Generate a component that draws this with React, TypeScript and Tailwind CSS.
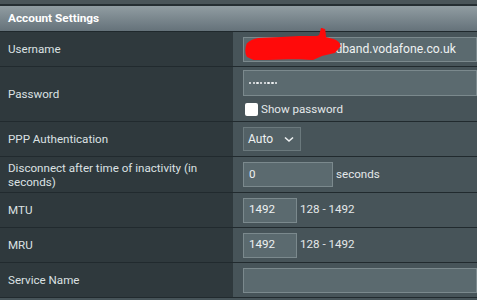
import React from "react";

const FONT = { fontFamily: "Roboto, 'Noto Sans', sans-serif" };

function Row({
  label,
  h,
  children,
}: {
  label: React.ReactNode;
  h: string;
  children?: React.ReactNode;
}) {
  return (
    <div className={`grid grid-cols-[233px_1fr] border-b border-[#212a2e] ${h}`}>
      <div className="flex items-center bg-[#2f393d] pl-2 pr-3 text-[11.6px] leading-[14px] text-[#dce1e3]">
        {label}
      </div>
      <div className="flex items-center bg-[#475459] pl-[10px]">{children}</div>
    </div>
  );
}

const inputCls =
  "h-[25px] border border-[#7b898d] bg-[#5b6a6f] pl-[5px] text-[11.6px] text-[#eef1f2] flex items-center";

export default function App() {
  return (
    <div className="h-[300px] w-[477px] overflow-hidden bg-[#475459]" style={FONT}>
      <div className="h-[6px] border-b-2 border-[#252e32] bg-[#4a5559]" />
      <div className="flex h-[26px] items-center border-b border-[#1f282c] bg-gradient-to-b from-[#919da2] to-[#65727a] pl-2 text-[11.8px] font-bold text-white">
        Account Settings
      </div>

      <Row label="Username" h="h-[35px]">
        <div className={`${inputCls} relative w-full text-[12.2px]`}>
          <span className="pl-[51px]">@broadband.vodafone.co.uk</span>
          {/* red scribble drawn over the account name */}
          <svg
            className="absolute left-[-1px] top-[-10px]"
            width="104"
            height="36"
            viewBox="0 0 115 36"
            preserveAspectRatio="none"
          >
            <path
              d="M5 16 Q10 12 17 11 L42 10 L62 9 L82 9 L85 8 L87 1 L90 2 L91 10 L100 12 Q106 14 107 18 L101 24 L87 27 L77 31 L57 30 L27 31 L12 31 L5 28 Q2 23 5 16 Z"
              fill="#ff0a0a"
              stroke="#ff0a0a"
              strokeWidth="2"
              strokeLinejoin="round"
            />
          </svg>
        </div>
      </Row>

      <Row label="Password" h="h-[55px]">
        <div className="flex w-full flex-col">
          <div className={`${inputCls} h-[26px] w-full gap-[1.3px]`}>
            {Array.from({ length: 8 }).map((_, i) => (
              <span key={i} className="h-[2.4px] w-[2.4px] rounded-full bg-[#eef1f2]" />
            ))}
          </div>
          <label className="mt-[5px] flex items-center gap-[3px] pl-[2px] text-[11.6px] text-[#e4e8ea]">
            <span className="inline-block h-[13px] w-[13px] rounded-[2px] bg-white" />
            Show password
          </label>
        </div>
      </Row>

      <Row label="PPP Authentication" h="h-[35px]">
        <div className="flex h-[24px] w-[58px] items-center justify-between border border-[#6b797d] bg-[#536166] pl-[4px] pr-[6px] text-[12px] text-[#eef1f2]">
          Auto
          <svg width="10" height="7" viewBox="0 0 10 7">
            <path d="M1 1.5 L5 5 L9 1.5" stroke="#eef1f2" strokeWidth="1.6" fill="none" />
          </svg>
        </div>
      </Row>

      <Row
        label={
          <span>
            Disconnect after time of inactivity (in
            <br />
            seconds)
          </span>
        }
        h="h-[36px]"
      >
        <div className={`${inputCls} w-[90px]`}>0</div>
        <span className="ml-[3px] text-[11.6px] text-[#e4e8ea]">seconds</span>
      </Row>

      <Row label="MTU" h="h-[35px]">
        <div className={`${inputCls} w-[54px]`}>1492</div>
        <span className="ml-[3px] text-[11.6px] text-[#e4e8ea]">128 - 1492</span>
      </Row>

      <Row label="MRU" h="h-[35px]">
        <div className={`${inputCls} w-[54px]`}>1492</div>
        <span className="ml-[3px] text-[11.6px] text-[#e4e8ea]">128 - 1492</span>
      </Row>

      <Row label="Service Name" h="h-[35px]">
        <div className={`${inputCls} w-full`} />
      </Row>
    </div>
  );
}
